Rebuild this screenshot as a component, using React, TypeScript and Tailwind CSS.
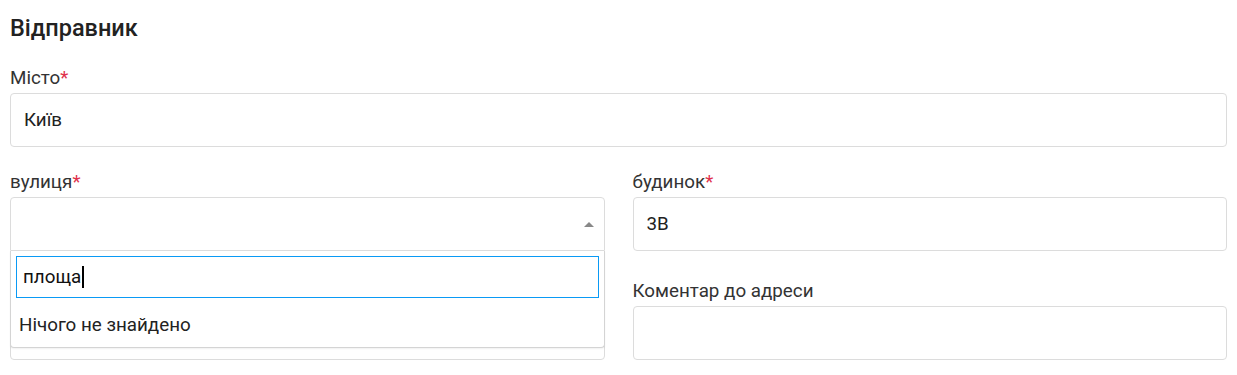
const font = { fontFamily: 'Roboto, "Noto Sans", sans-serif' }

function Label({ text, required }: { text: string; required?: boolean }) {
  return (
    <div className="text-[18.8px] leading-[24px] text-[#333] mb-[3px]">
      {text}
      {required && <span className="text-[#e0314b]">*</span>}
    </div>
  )
}

function TextInput({ value }: { value?: string }) {
  return (
    <div className="h-[54px] border border-[#dcdcdc] rounded-[4px] bg-white flex items-center px-[13px] text-[18.8px] text-[#212121]">
      {value}
    </div>
  )
}

function StreetSelect() {
  return (
    <div className="relative">
      <div className="h-[54px] border border-[#dcdcdc] rounded-t-[4px] bg-white flex items-center justify-end pr-[10px]">
        <span className="w-0 h-0 border-l-[5px] border-r-[5px] border-b-[5px] border-l-transparent border-r-transparent border-b-[#888]" />
      </div>
      <div className="absolute left-0 right-0 top-full z-10 bg-white border border-t-0 border-[#d4d4d4] rounded-b-[4px] shadow-[0_1px_2px_rgba(0,0,0,0.06)]">
        <div className="px-[5px] pt-[5px]">
          <div className="h-[42px] border border-[#0a9af5] flex items-center px-[6px] text-[18.8px] text-[#111]">
            площа
            <span className="inline-block w-[2px] h-[22px] bg-black ml-[1px]" />
          </div>
        </div>
        <div className="px-[8px] pt-[15px] pb-[10px] text-[18.8px] leading-[24px] text-[#222]">Нічого не знайдено</div>
      </div>
    </div>
  )
}

export default function App() {
  return (
    <div className="bg-white min-h-[375px] px-[10px] pt-[14px]" style={font}>
      <h2 className="text-[23.5px] leading-[28px] font-medium text-[#222] mb-[24px]">Відправник</h2>

      <div className="mb-[23px]">
        <Label text="Місто" required />
        <TextInput value="Київ" />
      </div>

      <div className="grid grid-cols-2 gap-x-[28px]">
        <div className="mb-[28px]">
          <Label text="вулиця" required />
          <StreetSelect />
        </div>
        <div className="mb-[28px]">
          <Label text="будинок" required />
          <TextInput value="3В" />
        </div>
        <div>
          <Label text={'\u00a0'} />
          <TextInput />
        </div>
        <div>
          <Label text="Коментар до адреси" />
          <TextInput />
        </div>
      </div>
    </div>
  )
}
